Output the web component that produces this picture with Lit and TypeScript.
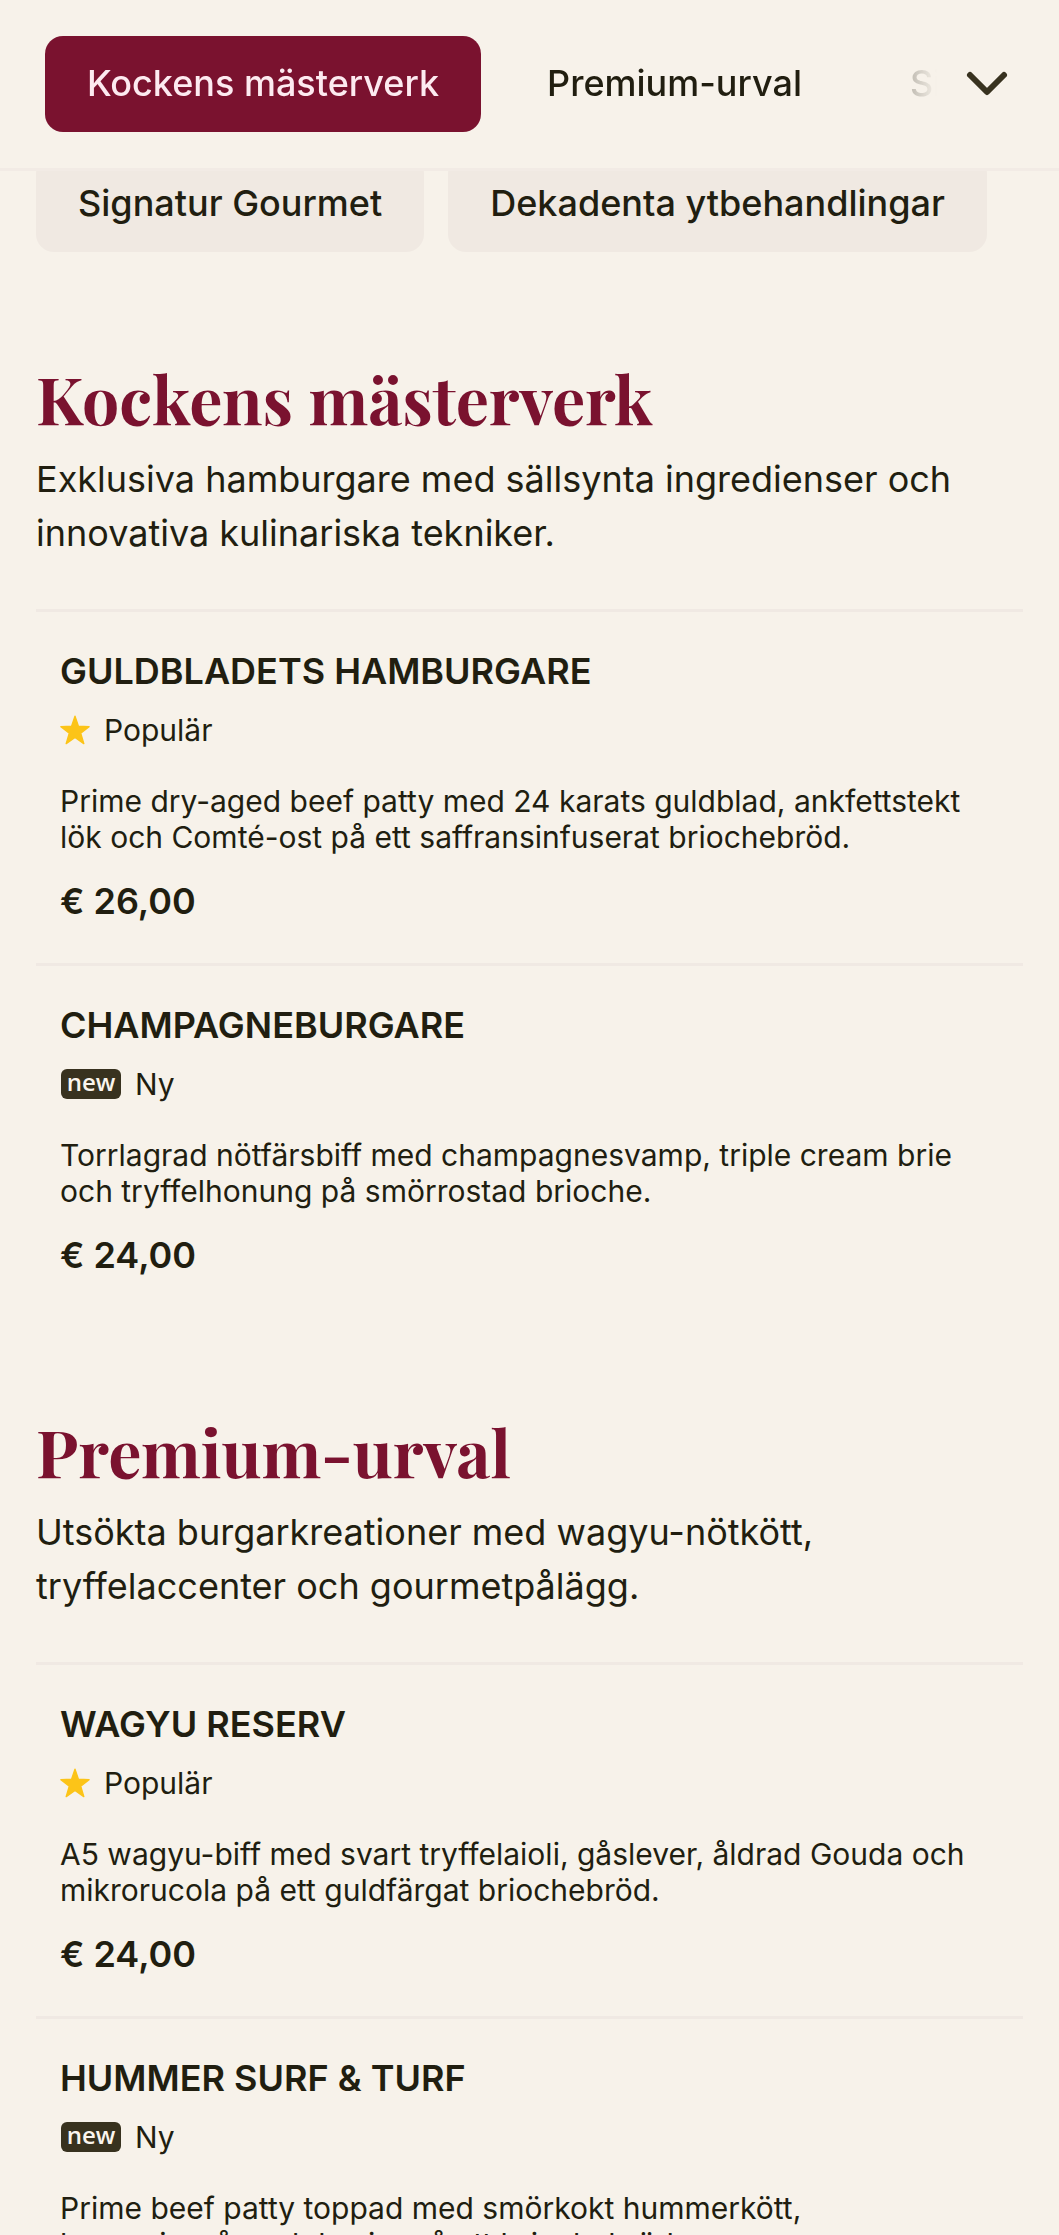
import { LitElement, html, css } from "lit";
import { customElement, property } from "lit/decorators.js";

type Tag = "popular" | "new";

interface Dish {
  name: string;
  tag: Tag;
  text: string;
  price: string;
}

interface Section {
  id: string;
  title: string;
  intro: string;
  dishes: Dish[];
}

const sections: Section[] = [
  {
    id: "kockens-masterverk",
    title: "Kockens mästerverk",
    intro: "Exklusiva hamburgare med sällsynta ingredienser och innovativa kulinariska tekniker.",
    dishes: [
      {
        name: "GULDBLADETS HAMBURGARE",
        tag: "popular",
        text: "Prime dry-aged beef patty med 24 karats guldblad, ankfettstekt lök och Comté-ost på ett saffransinfuserat briochebröd.",
        price: "€ 26,00",
      },
      {
        name: "CHAMPAGNEBURGARE",
        tag: "new",
        text: "Torrlagrad nötfärsbiff med champagnesvamp, triple cream brie och tryffelhonung på smörrostad brioche.",
        price: "€ 24,00",
      },
    ],
  },
  {
    id: "premium-urval",
    title: "Premium-urval",
    intro: "Utsökta burgarkreationer med wagyu-nötkött, tryffelaccenter och gourmetpålägg.",
    dishes: [
      {
        name: "WAGYU RESERV",
        tag: "popular",
        text: "A5 wagyu-biff med svart tryffelaioli, gåslever, åldrad Gouda och mikrorucola på ett guldfärgat briochebröd.",
        price: "€ 24,00",
      },
      {
        name: "HUMMER SURF & TURF",
        tag: "new",
        text: "Prime beef patty toppad med smörkokt hummerkött, bearnaisesås och kaviar på ett briochebröd.",
        price: "",
      },
    ],
  },
];

@customElement("menu-dish")
class MenuDish extends LitElement {
  @property({ attribute: false }) dish!: Dish;

  static styles = css`
    :host {
      display: block;
      border-top: 3px solid #f0e9e3;
      padding: 36px 24px 38px;
      color: #211e10;
    }
    .name {
      margin: 0;
      font-size: 36px;
      line-height: 46px;
      font-weight: 600;
    }
    .tag {
      display: flex;
      align-items: center;
      gap: 14px;
      margin-top: 12px;
      font-size: 30px;
      line-height: 48px;
    }
    .star {
      display: block;
      width: 30px;
      height: 30px;
    }
    .new {
      box-sizing: border-box;
      width: 60px;
      height: 30px;
      margin-left: 1px;
      border-radius: 6px;
      background: #38321f;
      color: #faf5ee;
      font-family: "Open Sans", "Noto Sans", sans-serif;
      font-size: 24px;
      line-height: 25px;
      font-weight: 600;
      text-align: center;
    }
    .text {
      margin: 29px 24px 0 0;
      font-size: 30px;
      line-height: 36px;
    }
    .price {
      margin: 22px 0 0;
      font-size: 36px;
      line-height: 48px;
      font-weight: 600;
    }
  `;

  render() {
    const d = this.dish;
    return html`
      <h3 class="name">${d.name}</h3>
      <div class="tag">
        ${d.tag === "popular"
          ? html`<svg class="star" viewBox="0 0 30 30" aria-hidden="true">
                <path
                  d="M15 1.2 18.4 11.3 29.1 11.6 20.7 18.1 23.8 28.6 15 22.4 6.2 28.6 9.3 18.1 .9 11.6 11.6 11.3Z"
                  fill="#fcc418"
                  stroke="#fcc418"
                  stroke-width="1.4"
                  stroke-linejoin="round"
                />
              </svg>
              <span>Populär</span>`
          : html`<span class="new">new</span><span>Ny</span>`}
      </div>
      <p class="text">${d.text}</p>
      ${d.price ? html`<p class="price">${d.price}</p>` : ""}
    `;
  }
}

@customElement("app-root")
class AppRoot extends LitElement {
  static styles = css`
    :host {
      display: block;
      height: 100vh;
      overflow: hidden;
      background: #f7f2ea;
      color: #211e10;
      font-family: Inter, "Liberation Sans", sans-serif;
    }
    .bar {
      display: flex;
      align-items: center;
      box-sizing: border-box;
      height: 171px;
      border-bottom: 3px solid #f2ebe5;
    }
    .tabs {
      display: flex;
      flex: 1;
      min-width: 0;
      gap: 24px;
      padding-left: 45px;
      overflow: hidden;
      -webkit-mask-image: linear-gradient(to right, #000 calc(100% - 108px), transparent calc(100% - 2px));
      mask-image: linear-gradient(to right, #000 calc(100% - 108px), transparent calc(100% - 2px));
    }
    .tab,
    .chip {
      flex: none;
      box-sizing: border-box;
      height: 96px;
      padding: 0 42px;
      border-radius: 18px;
      font-size: 36px;
      line-height: 94px;
      font-weight: 500;
      color: inherit;
      text-decoration: none;
      white-space: nowrap;
    }
    .active {
      background: #7a122f;
      color: #fdeaf0;
    }
    .more {
      flex: none;
      display: flex;
      align-items: center;
      justify-content: center;
      width: 96px;
      height: 96px;
      margin-right: 24px;
      padding: 0;
      border: 0;
      background: none;
      color: #38321f;
    }
    .more svg {
      width: 48px;
      height: 48px;
    }
    .chips {
      display: flex;
      align-items: flex-end;
      gap: 24px;
      height: 81px;
      margin-bottom: 12px;
      padding: 0 36px;
      overflow: hidden;
    }
    .chip {
      background: #f0e9e2;
    }
    .section {
      padding: 89px 36px 0;
    }
    .title {
      margin: 0;
      font-family: "Playfair Display", "Liberation Serif", serif;
      font-size: 66px;
      line-height: 90px;
      font-weight: 700;
      color: #7a122f;
    }
    .intro {
      margin: 9px 0 49px;
      font-size: 36px;
      line-height: 54px;
    }
  `;

  render() {
    return html`
      <nav class="bar" aria-label="Kategorier">
        <div class="tabs">
          <a class="tab active" href="#kockens-masterverk" aria-current="true">Kockens mästerverk</a>
          <a class="tab" href="#premium-urval">Premium-urval</a>
          <a class="tab" href="#signatur-gourmet">Signatur Gourmet</a>
        </div>
        <button class="more" type="button" aria-label="Visa alla kategorier">
          <svg
            viewBox="0 0 48 48"
            fill="none"
            stroke="currentColor"
            stroke-width="6"
            stroke-linecap="round"
            stroke-linejoin="round"
            aria-hidden="true"
          >
            <path d="M7 15 24 32 41 15" />
          </svg>
        </button>
      </nav>
      <div class="chips">
        <a class="chip" href="#signatur-gourmet">Signatur Gourmet</a>
        <a class="chip" href="#dekadenta-ytbehandlingar">Dekadenta ytbehandlingar</a>
      </div>
      <main>
        ${sections.map(
          (s) => html`
            <section class="section" id=${s.id}>
              <h2 class="title">${s.title}</h2>
              <p class="intro">${s.intro}</p>
              ${s.dishes.map((d) => html`<menu-dish .dish=${d}></menu-dish>`)}
            </section>
          `
        )}
      </main>
    `;
  }
}
